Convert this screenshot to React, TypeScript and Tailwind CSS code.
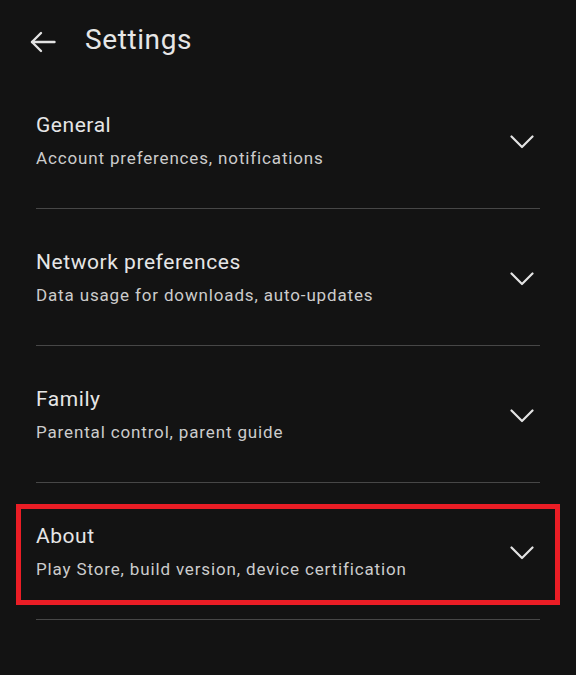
import React from "react";

const items = [
  { title: "General", sub: "Account preferences, notifications" },
  { title: "Network preferences", sub: "Data usage for downloads, auto-updates" },
  { title: "Family", sub: "Parental control, parent guide" },
  { title: "About", sub: "Play Store, build version, device certification", highlight: true },
];

function Chevron() {
  return (
    <svg width="24" height="14" viewBox="0 0 24 14" fill="none" className="shrink-0 mt-[3px]">
      <polyline points="1.5,1.5 12,12 22.5,1.5" stroke="#e3e3e3" strokeWidth="2.2" strokeLinecap="round" strokeLinejoin="round" />
    </svg>
  );
}

function BackArrow() {
  return (
    <svg width="26" height="22" viewBox="0 0 26 22" fill="none">
      <line x1="2" y1="11" x2="24.5" y2="11" stroke="#e3e3e3" strokeWidth="2.4" strokeLinecap="round" />
      <polyline points="11,2 2,11 11,20" stroke="#e3e3e3" strokeWidth="2.4" strokeLinecap="round" strokeLinejoin="round" />
    </svg>
  );
}

export default function App() {
  return (
    <div
      className="w-full h-[675px] bg-[#131313] overflow-hidden"
      style={{ fontFamily: "Roboto, 'Noto Sans', Arial, sans-serif" }}
    >
      <div className="h-[72px] flex items-start pt-[22px]">
        <div className="ml-[30px] mt-[9px]">
          <BackArrow />
        </div>
        <div className="ml-[29px] text-[28px] leading-[36px] tracking-[0.6px] text-[#e6e6e6]">Settings</div>
      </div>
      {items.map((it) => (
        <div key={it.title}>
          <div className="h-[136px] px-[16px] pt-[21px] pb-[14px]">
            <div
              className={
                "h-full border-[5px] flex items-center justify-between pl-[15px] pr-[21px] pb-[6px] " +
                (it.highlight ? "border-[#ea1d25]" : "border-transparent")
              }
            >
              <div className="flex flex-col">
                <div className="text-[21px] leading-[28px] tracking-[0.55px] text-[#e6e6e6]">{it.title}</div>
                <div className="mt-[7px] text-[17px] leading-[24px] tracking-[0.85px] text-[#cccccc]">{it.sub}</div>
              </div>
              <Chevron />
            </div>
          </div>
          <div className="mx-[36px] h-px bg-[#474747]" />
        </div>
      ))}
    </div>
  );
}
